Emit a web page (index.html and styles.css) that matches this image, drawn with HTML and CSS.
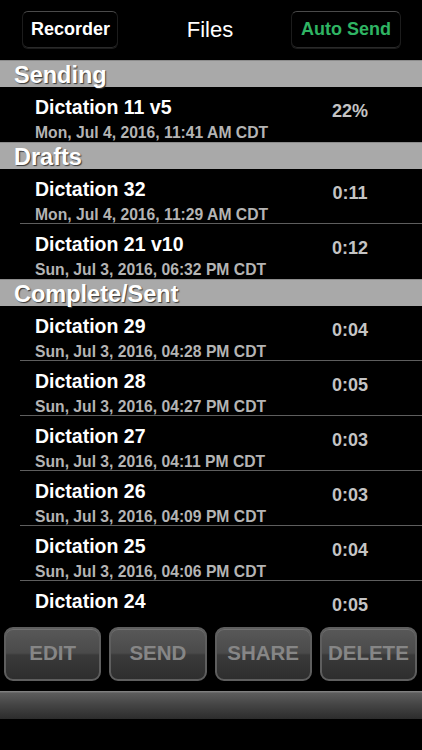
FILE: index.html
```html
<!DOCTYPE html>
<html lang="en">
<head>
    <meta charset="utf-8">
    <meta name="viewport" content="width=device-width,initial-scale=1,user-scalable=no">
    <title>Files</title>
    <link rel="stylesheet" href="styles.css">
</head>
<body>
    <div class="screen">
        <div class="topbar">
            <button class="navbtn">Recorder</button>
            <div class="title">Files</div>
            <button class="navbtn green">Auto Send</button>
        </div>

        <div class="list">
            <div class="section">Sending</div>
            <div class="row last">
                <div class="info">
                    <div class="name">Dictation 11 v5</div>
                    <div class="date">Mon, Jul 4, 2016, 11:41 AM CDT</div>
                </div>
                <div class="len">22%</div>
            </div>

            <div class="section">Drafts</div>
            <div class="row">
                <div class="info">
                    <div class="name">Dictation 32</div>
                    <div class="date">Mon, Jul 4, 2016, 11:29 AM CDT</div>
                </div>
                <div class="len">0:11</div>
            </div>
            <div class="row last">
                <div class="info">
                    <div class="name">Dictation 21 v10</div>
                    <div class="date">Sun, Jul 3, 2016, 06:32 PM CDT</div>
                </div>
                <div class="len">0:12</div>
            </div>

            <div class="section">Complete/Sent</div>
            <div class="row">
                <div class="info">
                    <div class="name">Dictation 29</div>
                    <div class="date">Sun, Jul 3, 2016, 04:28 PM CDT</div>
                </div>
                <div class="len">0:04</div>
            </div>
            <div class="row">
                <div class="info">
                    <div class="name">Dictation 28</div>
                    <div class="date">Sun, Jul 3, 2016, 04:27 PM CDT</div>
                </div>
                <div class="len">0:05</div>
            </div>
            <div class="row">
                <div class="info">
                    <div class="name">Dictation 27</div>
                    <div class="date">Sun, Jul 3, 2016, 04:11 PM CDT</div>
                </div>
                <div class="len">0:03</div>
            </div>
            <div class="row">
                <div class="info">
                    <div class="name">Dictation 26</div>
                    <div class="date">Sun, Jul 3, 2016, 04:09 PM CDT</div>
                </div>
                <div class="len">0:03</div>
            </div>
            <div class="row">
                <div class="info">
                    <div class="name">Dictation 25</div>
                    <div class="date">Sun, Jul 3, 2016, 04:06 PM CDT</div>
                </div>
                <div class="len">0:04</div>
            </div>
            <div class="row">
                <div class="info">
                    <div class="name">Dictation 24</div>
                </div>
                <div class="len">0:05</div>
            </div>
        </div>

        <div class="toolbar">
            <button class="tbtn">EDIT</button>
            <button class="tbtn">SEND</button>
            <button class="tbtn">SHARE</button>
            <button class="tbtn">DELETE</button>
        </div>
        <div class="bottombar"></div>
    </div>
</body>
</html>
```

FILE: styles.css
```css
html,
body {
    margin: 0;
    padding: 0;
    background: #000000;
}

body {
    font-family: "Liberation Sans", Arial, sans-serif;
    color: #ffffff;
}

.screen {
    width: 422px;
    height: 750px;
    display: flex;
    flex-direction: column;
    overflow: hidden;
}

.topbar {
    height: 60px;
    display: grid;
    grid-template-columns: 1fr auto 1fr;
    align-items: center;
    padding: 0 21px 0 22px;
    box-sizing: border-box;
}

.title {
    font-size: 22px;
    padding: 0 0 1px 0;
    margin-left: -3px;
}

.navbtn {
    font-family: inherit;
    font-weight: bold;
    font-size: 18px;
    color: #ffffff;
    background: #000000;
    height: 38px;
    padding: 0 7px 2px 8px;
    border: 1px solid #1c1c1c;
    border-top-color: #4a4a4a;
    border-radius: 6px;
    box-shadow: inset 0 -1px 0 #2a2a2a;
    justify-self: start;
}

.navbtn.green {
    color: #2fb463;
    justify-self: end;
    padding: 0 9px 2px 9px;
}

.list {
    height: 560px;
    overflow: hidden;
}

.section {
    height: 27px;
    line-height: 29px;
    background: #a9a9a9;
    border-top: 1px solid #8c8c8c;
    box-sizing: border-box;
    padding-left: 14px;
    font-size: 23.5px;
    font-weight: bold;
    color: #ffffff;
    text-shadow: 1px 1px 1px #3a3a3a;
}

.row {
    height: 55px;
    margin-left: 20px;
    display: flex;
    align-items: flex-start;
    border-bottom: 1px solid #5e5e5e;
    box-sizing: border-box;
}

.row.last {
    border-bottom-color: transparent;
}

.info {
    flex: 1;
    padding-left: 15px;
    padding-top: 9px;
}

.name {
    font-size: 19.5px;
    font-weight: bold;
    line-height: 22px;
}

.date {
    font-size: 15.7px;
    font-weight: bold;
    color: #b4b4b4;
    line-height: 20px;
    margin-top: 5px;
}

.len {
    width: 62px;
    margin-right: 41px;
    padding-top: 14px;
    text-align: center;
    font-size: 18px;
    line-height: 20px;
    font-weight: bold;
    color: #c4c4c4;
}

.toolbar {
    height: 70px;
    display: flex;
    gap: 8px;
    padding: 7px 5px 9px 4px;
    box-sizing: border-box;
    background: #000000;
}

.tbtn {
    flex: 1;
    font-family: inherit;
    font-weight: bold;
    font-size: 20.5px;
    color: #868686;
    border: 2px solid #5e5e5e;
    border-radius: 9px;
    background: linear-gradient(#585858, #4a4a4a 48%, #3a3a3a 52%, #2e2e2e);
    box-shadow: inset 0 1px 0 #707070;
    padding: 0 0 2px 0;
}

.bottombar {
    height: 28px;
    margin-top: 1px;
    background: linear-gradient(#8a8a8a, #5c5c5c 8%, #444444 50%, #2c2c2c);
}
```
